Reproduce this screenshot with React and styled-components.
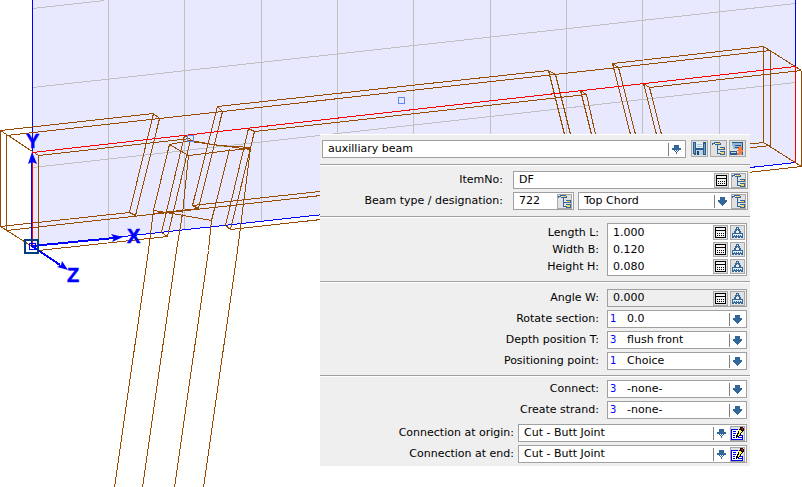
import React from "react";
import styled, { createGlobalStyle } from "styled-components";

const GlobalStyle = createGlobalStyle`
  body { margin: 0; background: #fff; overflow: hidden; }
  * { box-sizing: border-box; }
`;

const Workspace = styled.main`
  position: relative;
  min-height: 100vh;
  font: 11px/16px Verdana, "DejaVu Sans", sans-serif;
  color: #000;
`;

const Drawing = styled.svg`
  display: block;
  min-width: 100%;
  flex: none;
`;

const AxisName = styled.text`
  font: bold 20px "Liberation Sans", Arial, sans-serif;
  fill: #0000ff;
  stroke: #0000ff;
  stroke-width: 0.5px;
`;

const Panel = styled.form`
  position: absolute;
  left: 320px;
  top: 134px;
  width: 430px;
  background: #efefef;
  box-shadow: inset 0 1px #fff;
`;

const Section = styled.section`
  display: flex;
  flex-direction: column;
  gap: 3px;
  padding: ${(p) => p.$top}px ${(p) => (p.$inset ? 3 : 2)}px ${(p) => p.$bottom}px 2px;
  border-bottom: ${(p) => (p.$last ? "0" : "1px solid #fff")};
  box-shadow: ${(p) => (p.$last ? "none" : "inset 0 -1px #a0a0a0")};
`;

const Group = styled.div`
  display: flex;
  flex-direction: column;
  gap: 3px;
  margin-top: ${(p) => (p.$spaced ? 2 : 0)}px;
`;

const Row = styled.div`
  display: flex;
  gap: ${(p) => p.$gap}px;
`;

const Label = styled.label`
  flex: 1;
  text-align: right;
  white-space: nowrap;
  line-height: 18px;
`;

const LabelStack = styled.div`
  flex: 1;
  display: flex;
  flex-direction: column;
  padding: 1px 0;
  ${Label} { line-height: 17px; }
`;

const Field = styled.div`
  display: flex;
  align-items: center;
  width: ${(p) => (p.$width ? `${p.$width}px` : "auto")};
  flex: ${(p) => (p.$width ? "none" : "1")};
  min-width: 0;
  height: 18px;
  padding-right: 1px;
  gap: 1px;
  border: 1px solid #a0a0a0;
  background: ${(p) => (p.$muted ? "#efefef" : "#fff")};
`;

const FieldStack = styled.div`
  width: 140px;
  border: 1px solid #a0a0a0;
  background: #fff;
`;

const StackLine = styled.div`
  display: flex;
  align-items: center;
  gap: 1px;
  height: 17px;
  padding-right: 1px;
`;

const TextInput = styled.input`
  flex: 1;
  min-width: 0;
  width: 0;
  height: 16px;
  border: 0;
  padding: 0 5px;
  background: transparent;
  font: inherit;
  color: inherit;
  outline: none;
`;

const Select = styled.select`
  flex: 1;
  min-width: 0;
  width: 0;
  height: 16px;
  border: 0;
  padding: 0 5px;
  appearance: none;
  background: transparent;
  font: inherit;
  color: inherit;
  outline: none;
`;

const Index = styled.span`
  width: 13px;
  padding-left: 2px;
  font-size: 10px;
  line-height: 14px;
  color: #0000ff;
`;

const ArrowCell = styled.span`
  display: flex;
  align-items: center;
  justify-content: center;
  width: 16px;
  height: 13px;
  border-left: 1px solid #808080;
  pointer-events: none;
`;

const IconButton = styled.button`
  display: flex;
  align-items: center;
  justify-content: center;
  flex: none;
  width: ${(p) => (p.$large ? 17 : 15)}px;
  height: ${(p) => (p.$large ? 17 : 15)}px;
  padding: 0;
  border: 1px solid #a8a8a8;
  background: #e1e1e1;
`;

const Tools = styled.div`
  display: flex;
  gap: 2px;
  padding: 0 2px 0 5px;
`;

const ButtonPair = styled.div`
  display: flex;
  gap: 2px;
`;

const Glyph = styled.svg`
  display: block;
  flex: none;
  shape-rendering: crispEdges;
`;

const blue = "#336699";

const ArrowIcon = ({ soft }) => (
  <Glyph width="9" height="9" viewBox="0 0 9 9" fill={blue}>
    <path d="M2 0h5v3h2v2H8v1H7v1H6v1H5v1H4V8H3V7H2V6H1V5H0V3h2z" />
    {soft && (
      <path
        fill="#fff"
        d="M1 5h1v1H1zM3 5h1v1H3zM5 5h1v1H5zM7 5h1v1H7zM2 6h1v1H2zM4 6h1v1H4zM6 6h1v1H6zM3 7h1v1H3zM5 7h1v1H5z"
      />
    )}
  </Glyph>
);

const TreeIcon = () => (
  <Glyph width="13" height="13" viewBox="0 0 13 13">
    <path fill={blue} d="M0 1h2v1H1v1H0zM2 0h6v1h1v2H6v4h2V5h5v3H8V8H6v3h2V9h5v4H8v-1H5V3H3V2H2z" />
    <path fill="#ffd45c" d="M3 1h5v1H3zM9 6h3v1H9zM9 10h3v2H9z" />
    <path fill="#fff" d="M3 1h1v1H3zM8 6h1v1H8zM8 10h1v1H8z" />
  </Glyph>
);

const CalcIcon = () => (
  <Glyph width="11" height="11" viewBox="0 0 11 11">
    <path d="M0 0h11v11H0z" />
    <path fill="#f4f4f4" d="M1 1h9v2H1zM1 4h9v6H1z" />
    <path d="M2 6h1v1H2zM4 6h1v1H4zM6 6h1v1H6zM8 6h1v1H8zM2 8h1v1H2zM4 8h1v1H4zM6 8h1v1H6zM8 8h1v1H8z" />
  </Glyph>
);

const MeasureIcon = () => (
  <Glyph width="11" height="11" viewBox="0 0 11 11" fill={blue}>
    <path d="M4 0h3v2h1v2h1v2h2v5H0V6h2V4h1V2h1z" />
    <path fill="#e8eef5" d="M5 1h1v1H5zM5 3h1v1h1v2H4V4h1zM1 7h9v2H9V8H8v1H7V8H6v1H5V8H4v1H3V8H2v1H1zM2 10h1v1H2zM5 10h1v1H5zM8 10h1v1H8z" />
  </Glyph>
);

const SaveIcon = () => (
  <Glyph width="13" height="13" viewBox="0 0 13 13">
    <path fill="#285a8c" d="M0 0h13v13H1v-1H0z" />
    <path fill="#6fa0cc" d="M1 1h1v10H1zM11 2h1v10h-1z" />
    <path fill="#e6f0f5" d="M3 0h7v6H3z" />
    <path fill="#a8c6d8" d="M4 2h5v1H4zM4 4h5v1H4z" />
    <path fill="#bdd1df" d="M3 8h7v5H3z" />
    <path fill="#17466e" d="M4 9h2v4H4z" />
  </Glyph>
);

const TransferIcon = () => (
  <Glyph width="15" height="15" viewBox="0 0 15 15">
    <path fill="#8fbbd8" d="M2 1h11v13H8V8H3z" />
    <path fill="#225987" d="M2 1h11v1H2zM5 4h6v1H5zM5 6h4v1H5zM12 2h1v12h-1z" />
    <path fill="#225987" d="M0 10h7v4H0z" />
    <path fill="#c2dcea" d="M1 11h5v1H1z" />
    <path fill="#ff783c" d="M9 5h2v1h1v3h1v2h-1v2h-2v1H7v-2h2v-2H7V9h1V7h1z" />
  </Glyph>
);

const EditIcon = () => (
  <Glyph width="13" height="13" viewBox="0 0 13 13">
    <path fill="#0000f0" d="M0 2h7v1H1v9h10V8h1v5H0z" />
    <path fill="#fff" d="M1 3h10v9H1z" />
    <path fill="#0000f0" d="M2 4h3v1H2zM2 6h3v1H2zM2 8h2v1H2zM2 10h2v1H2zM8 8h3v1H8zM7 10h4v1H7z" />
    <path d="M9 0h3v1h1v3h-1v1h-1v1h-1v2H9v1H8v1H6v1H5V8h1V6h1V4h1V2h1z" />
    <path fill="#ffff40" d="M8 3h2v1h1v1h-1v1H9v2H8v1H7V7h1z" />
    <path fill="#f00000" d="M10 1h2v2h-1V2h-1z" />
  </Glyph>
);

const Tool = ({ name, icon: Icon, large }) => (
  <IconButton type="button" aria-label={name} title={name} $large={large}>
    <Icon />
  </IconButton>
);

const Choice = ({ id, value, soft, label }) => (
  <>
    <Select id={id} aria-label={label} defaultValue={value}>
      <option>{value}</option>
    </Select>
    <ArrowCell>
      <ArrowIcon soft={soft} />
    </ArrowCell>
  </>
);

const Measure = ({ id, value, icon = MeasureIcon, name = "Measure" }) => (
  <>
    <TextInput id={id} defaultValue={value} />
    <ButtonPair>
      <Tool name="Calculator" icon={CalcIcon} />
      <Tool name={name} icon={icon} />
    </ButtonPair>
  </>
);

const IndexedRow = ({ id, label, index, value }) => (
  <Row $gap={8}>
    <Label htmlFor={id}>{label}</Label>
    <Field $width={140}>
      <Index>{index}</Index>
      <Choice id={id} value={value} />
    </Field>
  </Row>
);

const JointRow = ({ id, label }) => (
  <Row $gap={4}>
    <Label htmlFor={id}>{label}</Label>
    <Field $width={229}>
      <Choice id={id} value="Cut - Butt Joint" soft />
      <Tool name="Edit joint" icon={EditIcon} />
    </Field>
  </Row>
);

const gridX = [108, 184, 261, 337, 413, 490, 566, 642, 719];

const beamEdges = [
  "M0 130L153 113M217 106L548 70M612 63L763 46M6 135L770 50",
  "M38 155L190 138M254 131L586 94M649 87L801 70",
  "M0 226L129 212M192 205L763 142M6 230L770 145",
  "M38 250L167 236M230 229L801 166",
  "M0 130V226M6 135V230M38 155V250M763 46V142M770 50V145M801 70V166",
  "M0 130L38 155M0 226L38 250M763 46L801 70M763 142L801 166",
];

const notchEdges = [
  "M153 113L159 118L135 215L129 212Z",
  "M217 106L222 111L198 208L192 205Z",
  "M184 135L190 139L167 236L161 232Z",
  "M248 128L254 131L230 229L225 225Z",
  "M564 134L548 70L555 74L570 134",
  "M591 134L580 90L586 94L595 134",
  "M630 134L612 63L618 67L635 134",
  "M656 134L643 83L649 87L661 134",
];

const webEdges = [
  "M114 487L148 250L153 210L169 144L188 155L182 213L176 250L142 487",
  "M174 487L208 250L211 220L229 149M250 148L237 250L203 487",
  "M169 144L190 140L218 145L250 147M190 141L250 149M188 155L229 150L250 148",
  "M153 210L172 213L211 220M153 213L198 208",
];

const Model = () => (
  <Drawing width="802" height="487" viewBox="0 0 802 487" role="img" aria-label="Beam wireframe">
    <path d="M32 0H796V162L32 246Z" fill="#e8e8fe" shapeRendering="crispEdges" />
    <g transform="translate(.5 .5)" fill="none" shapeRendering="crispEdges">
      <g stroke="#c0c0c0">
        {gridX.map((x) => (
          <path key={x} d={`M${x} -1V${Math.round(246 - (x - 32) * 0.11)}`} />
        ))}
        <path d="M32 8L104 0M32 87L795 3M32 167L795 82" />
      </g>
      <path stroke="#0000ff" d="M32 -1V152M795 -1V66M32 246L795 162" />
      <g stroke="#964b00">
        {[...beamEdges, ...notchEdges, ...webEdges].map((d) => (
          <path key={d} d={d} />
        ))}
      </g>
      <path stroke="#ff0000" d="M32 246V152L795 66V162" />
      <path stroke="#5a8cf0" d="M187 135h6v6h-6zM398 97h6v6h-6z" />
      <path stroke="#0000ff" d="M29 243h6v6h-6zM31 160V246" />
    </g>
    <g stroke="#0000ff" strokeWidth="2" shapeRendering="crispEdges">
      <path d="M32 246L114 238M32 246L60 265" />
    </g>
    <path
      fill="#0000ff"
      d="M123 237L111 234L114 238L112 242ZM68 270L62 261L61 265L57 267ZM32 152L28 164L32 162L37 164Z"
    />
    <path
      fill="none"
      stroke="#004080"
      strokeWidth="2"
      shapeRendering="crispEdges"
      d="M25 240h13v13H25z"
    />
    <AxisName x="127" y="243">X</AxisName>
    <AxisName x="26" y="148">Y</AxisName>
    <AxisName x="67" y="282">Z</AxisName>
  </Drawing>
);

export default function App() {
  return (
    <Workspace>
      <GlobalStyle />
      <Model />
      <Panel>
        <Section $top={6} $bottom={7}>
          <Row $gap={0}>
            <Field>
              <Choice label="Element" value="auxilliary beam" soft />
            </Field>
            <Tools>
              <Tool name="Save" icon={SaveIcon} large />
              <Tool name="Tree" icon={TreeIcon} large />
              <Tool name="Transfer" icon={TransferIcon} large />
            </Tools>
          </Row>
        </Section>

        <Section $top={5} $bottom={7}>
          <Row $gap={10}>
            <Label htmlFor="item">ItemNo:</Label>
            <Field $width={235}>
              <Measure id="item" value="DF" icon={TreeIcon} name="Tree" />
            </Field>
          </Row>
          <Row $gap={10}>
            <Label htmlFor="beam">Beam type / designation:</Label>
            <Row $gap={4}>
              <Field $width={61}>
                <TextInput id="beam" defaultValue="722" />
                <Tool name="Tree" icon={TreeIcon} />
              </Field>
              <Field $width={170}>
                <Choice label="Designation" value="Top Chord" />
                <Tool name="Tree" icon={TreeIcon} />
              </Field>
            </Row>
          </Row>
        </Section>

        <Section $top={5} $bottom={6} $inset>
          <Row $gap={8}>
            <LabelStack>
              <Label htmlFor="length">Length L:</Label>
              <Label htmlFor="width">Width B:</Label>
              <Label htmlFor="height">Height H:</Label>
            </LabelStack>
            <FieldStack>
              <StackLine><Measure id="length" value="1.000" /></StackLine>
              <StackLine><Measure id="width" value="0.120" /></StackLine>
              <StackLine><Measure id="height" value="0.080" /></StackLine>
            </FieldStack>
          </Row>
        </Section>

        <Section $top={6} $bottom={6} $inset>
          <Row $gap={8}>
            <Label htmlFor="angle">Angle W:</Label>
            <Field $width={140} $muted>
              <Measure id="angle" value="0.000" />
            </Field>
          </Row>
          <IndexedRow id="rotate" label="Rotate section:" index="1" value="0.0" />
          <IndexedRow id="depth" label="Depth position T:" index="3" value="flush front" />
          <IndexedRow id="point" label="Positioning point:" index="1" value="Choice" />
        </Section>

        <Section $top={3} $bottom={3} $inset $last>
          <Group>
            <IndexedRow id="connect" label="Connect:" index="3" value="-none-" />
            <IndexedRow id="strand" label="Create strand:" index="3" value="-none-" />
          </Group>
          <Group $spaced>
            <JointRow id="origin" label="Connection at origin:" />
            <JointRow id="end" label="Connection at end:" />
          </Group>
        </Section>
      </Panel>
    </Workspace>
  );
}
